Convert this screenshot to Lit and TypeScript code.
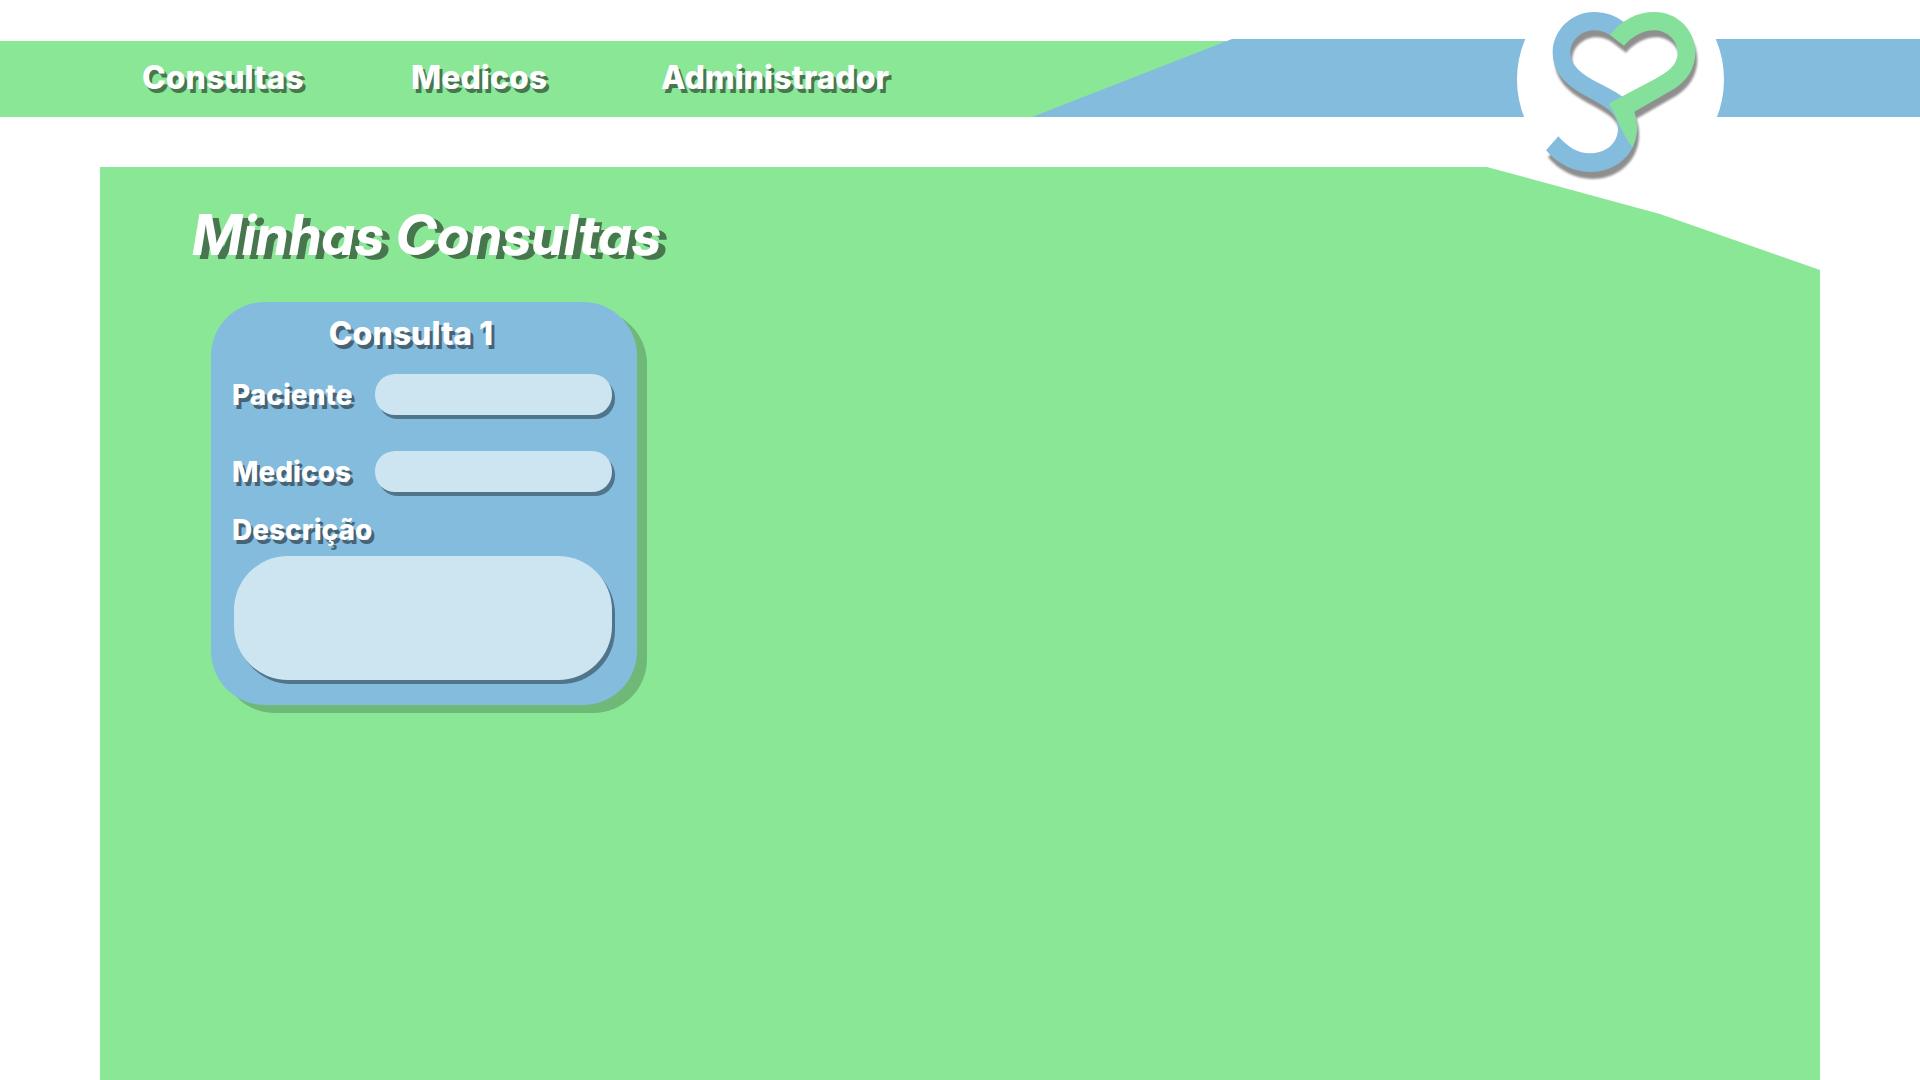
import { LitElement, html, css } from "lit";
import { customElement, property } from "lit/decorators.js";

@customElement("brand-logo")
export class BrandLogo extends LitElement {
  static styles = css`
    :host {
      display: block;
    }
    .mark {
      display: block;
      width: 240px;
      height: 200px;
      overflow: visible;
      filter: drop-shadow(2px 7px 1px rgba(0, 0, 0, 0.44));
    }
    .blue {
      fill: #84bcde;
    }
    .green {
      fill: #84e09a;
    }
  `;

  render() {
    return html`
      <svg class="mark" viewBox="0 0 720 600" role="img" aria-label="Logo">
        <path
          class="blue"
          d="M373 67C346 46 315 36 283 36C213 36 158 92 158 158C158 207 186 242 228 270C262 292 298 308 322 326C345 344 354 362 354 385C354 430 318 460 270 460C233 460 205 442 175 409L138 451C172 492 222 516 272 516C328 516 374 488 398 442L400 330L366 289C344 273 318 261 290 246C246 222 211 196 211 158C211 122 243 91 283 91C300 91 316 96 331 106Z"
        />
        <path
          class="green"
          d="M330 105C365 60 410 36 464 36C532 36 586 90 586 158C586 205 560 242 523 266L403 335C415 370 415 405 398 442C383 425 370 400 356 370C347 349 338 329 326 311L367 289L465 237C505 215 533 195 533 158C533 120 500 91 464 91C427 91 397 109 372 137Z"
        />
      </svg>
    `;
  }
}

@customElement("consulta-card")
export class ConsultaCard extends LitElement {
  @property({ type: Number }) numero = 1;

  static styles = css`
    :host {
      display: block;
    }
    .card {
      box-sizing: border-box;
      width: 426px;
      padding: 12px 25px 25px 21px;
      border-radius: 54px;
      background: #84bcde;
      box-shadow: 10px 8px 0 rgba(0, 0, 0, 0.2);
      color: #fff;
      text-shadow: 3px 4px 0 #476375;
      font-weight: 800;
    }
    .title {
      margin: 0 22px 0 0;
      padding-bottom: 20px;
      font-size: 32px;
      font-weight: 800;
      line-height: 40px;
      text-align: center;
    }
    .row {
      display: grid;
      grid-template-columns: 1fr 237px;
      align-items: center;
      margin-bottom: 36px;
    }
    .row + .row {
      margin-bottom: 18px;
    }
    .label {
      font-size: 28px;
      line-height: 40px;
    }
    .input,
    .area {
      box-sizing: border-box;
      border: 0;
      outline: 0;
      background: #cde4f1;
      box-shadow: 3px 4px 0 #50748a;
      color: #2d4655;
      font: 500 20px/28px Inter, "Liberation Sans", sans-serif;
    }
    .input {
      width: 100%;
      height: 41px;
      padding: 0 20px;
      border-radius: 20px;
    }
    .area {
      display: block;
      width: 378px;
      height: 124px;
      margin: 6px 0 0 2px;
      padding: 20px 32px;
      border-radius: 54px;
      resize: none;
    }
  `;

  render() {
    return html`
      <article class="card">
        <h2 class="title">Consulta ${this.numero}</h2>
        <div class="row">
          <label class="label" for="paciente">Paciente</label>
          <input class="input" id="paciente" type="text" />
        </div>
        <div class="row">
          <label class="label" for="medicos">Medicos</label>
          <input class="input" id="medicos" type="text" />
        </div>
        <label class="label" for="descricao">Descrição</label>
        <textarea class="area" id="descricao"></textarea>
      </article>
    `;
  }
}

@customElement("app-root")
export class AppRoot extends LitElement {
  static styles = css`
    :host {
      display: flex;
      flex-direction: column;
      min-height: 100vh;
      background: #fff;
      font-family: Inter, "Liberation Sans", sans-serif;
    }
    .header {
      position: relative;
      display: grid;
      grid-template-columns: 1032fr 200fr 688fr;
      grid-template-rows: 78px;
      margin: 39px 0 50px;
    }
    .nav {
      grid-area: 1 / 1 / 2 / 3;
      display: grid;
      grid-template-columns: 269px 250px auto;
      justify-content: start;
      align-items: center;
      margin-top: 2px;
      padding: 0 0 2px 142px;
      background: #8ae796;
      clip-path: polygon(0 0, 100% 0, 84% 100%, 0 100%);
    }
    .link {
      color: #fff;
      font-size: 32px;
      font-weight: 800;
      line-height: 40px;
      text-decoration: none;
      text-shadow: 3px 4px 0 #47764f;
    }
    .band {
      grid-area: 1 / 2 / 2 / 4;
      background: #84bcde;
      clip-path: polygon(200px 0, 100% 0, 100% 100%, 0 100%);
    }
    .badge {
      position: absolute;
      top: -63px;
      right: 196px;
      width: 207px;
      height: 207px;
      border-radius: 50%;
      background: #fff;
    }
    .logo {
      position: absolute;
      top: 24px;
      left: -17px;
    }
    .panel {
      flex: 1;
      margin: 0 100px;
      padding: 32px 92px 48px;
      background: #8ae796;
      clip-path: polygon(
        0 0,
        calc(100% - 333px) 0,
        calc(100% - 160px) 47px,
        100% 103px,
        100% 100%,
        0 100%
      );
    }
    .heading {
      margin: 0 0 31px;
      color: #fff;
      font-family: "Inter Display", Inter, "Liberation Sans", sans-serif;
      font-size: 56px;
      font-style: italic;
      font-weight: 700;
      line-height: 72px;
      text-shadow: 7px 4px 0 #47764f;
    }
    .cards {
      display: flex;
      flex-wrap: wrap;
      gap: 40px;
      padding-left: 19px;
    }
  `;

  render() {
    return html`
      <header class="header">
        <nav class="nav">
          <a class="link" href="#consultas">Consultas</a>
          <a class="link" href="#medicos">Medicos</a>
          <a class="link" href="#administrador">Administrador</a>
        </nav>
        <div class="band"></div>
        <div class="badge"><brand-logo class="logo"></brand-logo></div>
      </header>
      <main class="panel">
        <h1 class="heading">Minhas Consultas</h1>
        <div class="cards">
          <consulta-card .numero=${1}></consulta-card>
        </div>
      </main>
    `;
  }
}
